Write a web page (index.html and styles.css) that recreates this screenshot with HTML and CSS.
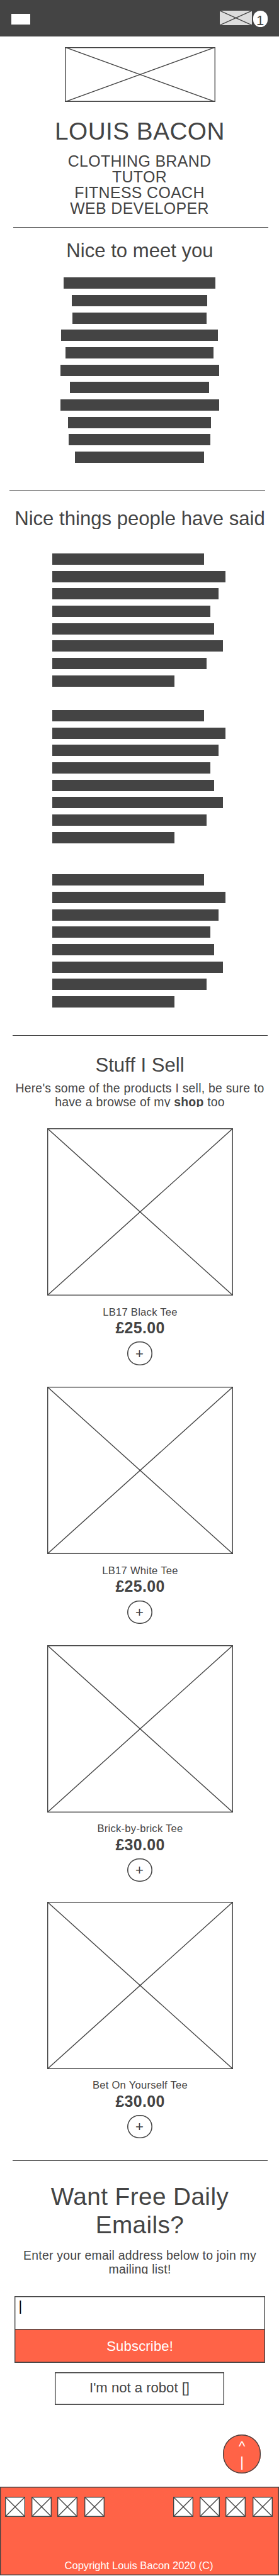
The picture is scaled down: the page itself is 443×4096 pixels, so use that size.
FILE: index.html
```html
<!DOCTYPE html>
<html lang="en">
<head>
<meta charset="utf-8">
<title>Louis Bacon</title>
<link rel="stylesheet" href="styles.css">
</head>
<body>
<header class="topbar">
  <div class="menu"></div>
  <div class="cart">
    <svg class="box cart-icon"><line x1="0" y1="0" x2="100%" y2="100%"/><line x1="100%" y1="0" x2="0" y2="100%"/></svg>
    <span class="count">1</span>
  </div>
</header>
<main>
  <svg class="box logo"><rect width="100%" height="100%"/><line x1="0" y1="0" x2="100%" y2="100%"/><line x1="100%" y1="0" x2="0" y2="100%"/></svg>
  <h1 class="name">LOUIS BACON</h1>
  <ul class="roles"><li>CLOTHING BRAND</li><li>TUTOR</li><li>FITNESS COACH</li><li>WEB DEVELOPER</li></ul>
  <div class="rule rule-about"></div>

  <h2 class="title title-about">Nice to meet you</h2>
  <div class="bars about">
    <i style="width:240.7px"></i><i style="width:215.8px"></i><i style="width:213px"></i><i style="width:249.2px"></i><i style="width:235.3px"></i><i style="width:252px"></i><i style="width:221.5px"></i><i style="width:252px"></i><i style="width:227.1px"></i><i style="width:224.3px"></i><i style="width:205.1px"></i>
  </div>
  <div class="rule rule-quotes"></div>

  <h2 class="title title-quotes">Nice things people have said</h2>
  <div class="bars quote quote-1">
    <i style="width:241px"></i><i style="width:275.4px"></i><i style="width:264.4px"></i><i style="width:250.6px"></i><i style="width:257.4px"></i><i style="width:271.2px"></i><i style="width:244.9px"></i><i style="width:193.8px"></i>
  </div>
  <div class="bars quote quote-2">
    <i style="width:241px"></i><i style="width:275.4px"></i><i style="width:264.4px"></i><i style="width:250.6px"></i><i style="width:257.4px"></i><i style="width:271.2px"></i><i style="width:244.9px"></i><i style="width:193.8px"></i>
  </div>
  <div class="bars quote quote-3">
    <i style="width:241px"></i><i style="width:275.4px"></i><i style="width:264.4px"></i><i style="width:250.6px"></i><i style="width:257.4px"></i><i style="width:271.2px"></i><i style="width:244.9px"></i><i style="width:193.8px"></i>
  </div>
  <div class="rule rule-shop"></div>

  <h2 class="title title-shop">Stuff I Sell</h2>
  <p class="copy copy-shop">Here's some of the products I sell, be sure to<br>have a browse of my <b>shop</b> too</p>

  <article class="product product-1">
    <svg class="box photo"><rect width="100%" height="100%"/><line x1="0" y1="0" x2="100%" y2="100%"/><line x1="100%" y1="0" x2="0" y2="100%"/></svg>
    <h3 class="item">LB17 Black Tee</h3>
    <p class="price">£25.00</p>
    <button class="add">+</button>
  </article>
  <article class="product product-2">
    <svg class="box photo"><rect width="100%" height="100%"/><line x1="0" y1="0" x2="100%" y2="100%"/><line x1="100%" y1="0" x2="0" y2="100%"/></svg>
    <h3 class="item">LB17 White Tee</h3>
    <p class="price">£25.00</p>
    <button class="add">+</button>
  </article>
  <article class="product product-3">
    <svg class="box photo"><rect width="100%" height="100%"/><line x1="0" y1="0" x2="100%" y2="100%"/><line x1="100%" y1="0" x2="0" y2="100%"/></svg>
    <h3 class="item">Brick-by-brick Tee</h3>
    <p class="price">£30.00</p>
    <button class="add">+</button>
  </article>
  <article class="product product-4">
    <svg class="box photo"><rect width="100%" height="100%"/><line x1="0" y1="0" x2="100%" y2="100%"/><line x1="100%" y1="0" x2="0" y2="100%"/></svg>
    <h3 class="item">Bet On Yourself Tee</h3>
    <p class="price">£30.00</p>
    <button class="add">+</button>
  </article>
  <div class="rule rule-mail"></div>

  <h2 class="headline">Want Free Daily<br>Emails?</h2>
  <p class="copy copy-mail">Enter your email address below to join my<br>mailing list!</p>
  <div class="form">
    <div class="field">|</div>
    <button class="subscribe">Subscribe!</button>
  </div>
  <div class="robot">I'm not a robot []</div>
  <div class="to-top"><span>^</span><span>|</span></div>
</main>
<footer class="footer">
  <div class="socials">
    <div class="group">
      <svg class="box social"><rect width="100%" height="100%"/><line x1="0" y1="0" x2="100%" y2="100%"/><line x1="100%" y1="0" x2="0" y2="100%"/></svg>
      <svg class="box social"><rect width="100%" height="100%"/><line x1="0" y1="0" x2="100%" y2="100%"/><line x1="100%" y1="0" x2="0" y2="100%"/></svg>
      <svg class="box social"><rect width="100%" height="100%"/><line x1="0" y1="0" x2="100%" y2="100%"/><line x1="100%" y1="0" x2="0" y2="100%"/></svg>
      <svg class="box social"><rect width="100%" height="100%"/><line x1="0" y1="0" x2="100%" y2="100%"/><line x1="100%" y1="0" x2="0" y2="100%"/></svg>
    </div>
    <div class="group">
      <svg class="box social"><rect width="100%" height="100%"/><line x1="0" y1="0" x2="100%" y2="100%"/><line x1="100%" y1="0" x2="0" y2="100%"/></svg>
      <svg class="box social"><rect width="100%" height="100%"/><line x1="0" y1="0" x2="100%" y2="100%"/><line x1="100%" y1="0" x2="0" y2="100%"/></svg>
      <svg class="box social"><rect width="100%" height="100%"/><line x1="0" y1="0" x2="100%" y2="100%"/><line x1="100%" y1="0" x2="0" y2="100%"/></svg>
      <svg class="box social"><rect width="100%" height="100%"/><line x1="0" y1="0" x2="100%" y2="100%"/><line x1="100%" y1="0" x2="0" y2="100%"/></svg>
    </div>
  </div>
  <p class="copyright">Copyright Louis Bacon 2020 (C)</p>
</footer>
</body>
</html>
```
FILE: styles.css
```css
* { box-sizing: border-box; margin: 0; padding: 0; }

:root {
  --ink: #444;
  --accent: #ff6347;
  --edge: inset 0 0 0 1.4px var(--ink);
}

body {
  width: 443px;
  height: 4096px;
  display: flex;
  flex-direction: column;
  overflow: hidden;
  background: #fff;
  color: var(--ink);
  font-family: "Liberation Sans", Arial, sans-serif;
  text-align: center;
  white-space: nowrap;
}

main { display: flex; flex-direction: column; }

button { border: 0; background: none; color: inherit; font: inherit; }

/* Crossed placeholder frames: the outer stroke is clipped to its inner half */
.box { display: block; flex: none; overflow: hidden; fill: #fff; stroke: var(--ink); }
.box rect { stroke-width: 2.8px; }
.box line { stroke-width: 1.4px; }

/* Header */
.topbar {
  flex: none;
  height: 58px;
  padding: 17px 18px 0;
  display: flex;
  justify-content: space-between;
  align-items: flex-start;
  background: var(--ink);
}
.menu { width: 30.3px; height: 16.6px; margin-top: 5.4px; background: #fff; }
.cart { display: flex; gap: 1.5px; }
.cart-icon { width: 51px; height: 23px; background: #ddd; }
.count {
  width: 23.5px;
  height: 26px;
  padding-top: 4px;
  border-radius: 12px;
  background: #fff;
  font-size: 22.1px;
  line-height: 24px;
}

/* Intro */
.logo { width: 239px; height: 87px; margin: 17px 0 0 103px; }
.name { margin-top: 25.1px; padding-left: 1px; font-size: 38.75px; font-weight: 400; line-height: 44px; letter-spacing: .45px; }
.roles { margin-top: 13.2px; list-style: none; font-size: 24.9px; line-height: 24.94px; letter-spacing: .36px; }

.rule { width: 405.6px; height: 1px; margin-bottom: .4px; background: #484848; }
.rule-about { margin-top: 17.2px; margin-left: 20.6px; }
.rule-quotes { margin-top: 43.1px; margin-left: 15.3px; }
.rule-shop { margin-top: 44.3px; margin-left: 19.5px; }
.rule-mail { margin-top: 34.3px; margin-left: 19.5px; }

.title { padding-left: 1px; font-size: 31.1px; font-weight: 400; line-height: 36px; overflow: hidden; }
.title-about { margin-top: 18.5px; }
.title-quotes { height: 33.6px; margin-top: 26.8px; }
.title-shop { margin-top: 28px; }

/* Blocked-out paragraphs */
.bars { display: flex; flex-direction: column; gap: 9.61px; }
.bars i { height: 18.07px; background: var(--ink); }
.about { margin-top: 24.1px; align-items: center; }
.quote { padding-left: 83px; align-items: flex-start; }
.quote-1 { margin-top: 39px; }
.quote-2 { margin-top: 37.3px; }
.quote-3 { margin-top: 49.7px; }

.copy { height: 41.1px; padding-left: 1px; overflow: hidden; font-size: 19.4px; line-height: 22px; letter-spacing: .24px; }
.copy-shop { margin-top: 6.7px; }
.copy-mail { margin-top: 14.3px; }

/* Products */
.product { display: flex; flex-direction: column; align-items: center; padding-left: 2px; }
.product-1, .product-2 { margin-top: 34.8px; }
.product-3 { margin-top: 34.4px; }
.product-4 { margin-top: 31.7px; }
.photo { width: 295px; height: 266px; }
.item { margin-top: 16.2px; font-size: 16.6px; font-weight: 400; line-height: 19px; letter-spacing: .25px; }
.price { margin-top: 1.4px; font-size: 24.9px; font-weight: 700; line-height: 28px; letter-spacing: .35px; }
.add {
  width: 40.1px;
  height: 37.2px;
  margin-top: 8.5px;
  margin-right: 1px;
  padding-right: 1px;
  border-radius: 18.6px;
  box-shadow: inset 0 0 0 1.6px var(--ink);
  font-size: 22.1px;
  line-height: 37px;
}

/* Mailing list */
.headline { margin-top: 33.7px; padding-left: 1px; font-size: 38.75px; font-weight: 400; line-height: 45.5px; letter-spacing: .4px; }
.form { width: 397.5px; height: 106.5px; margin: 34.7px 0 0 23.4px; box-shadow: var(--edge); display: flex; flex-direction: column; }
.field { height: 52.6px; padding: 3px 0 0 6px; color: #000; font-size: 22.1px; line-height: 25.4px; text-align: left; }
.subscribe { height: 53.9px; background: var(--accent); box-shadow: var(--edge); color: #fff; font-size: 22.1px; line-height: 53px; letter-spacing: .15px; }
.robot { width: 268.4px; height: 51.2px; margin: 15.2px 0 0 87.3px; box-shadow: var(--edge); font-size: 22.1px; line-height: 49px; }
.to-top {
  width: 59.6px;
  height: 62.3px;
  margin: 47.1px 0 0 354.3px;
  padding-top: 6px;
  display: flex;
  flex-direction: column;
  border-radius: 30px;
  background: var(--accent);
  box-shadow: var(--edge);
  color: #fff;
  font-size: 22.1px;
  line-height: 25.4px;
}

/* Footer */
.footer {
  flex: none;
  height: 141.1px;
  margin-top: 20.8px;
  padding: 16.6px 10px 0 8px;
  background: var(--accent);
  box-shadow: var(--edge);
  color: #fff;
}
.socials { display: flex; justify-content: space-between; }
.group { display: flex; gap: 9.5px; }
.social { width: 32px; height: 32px; }
.social:last-child { margin-left: 1.5px; }
.copyright { margin-top: 67.4px; font-size: 16.6px; line-height: 19px; }
```
